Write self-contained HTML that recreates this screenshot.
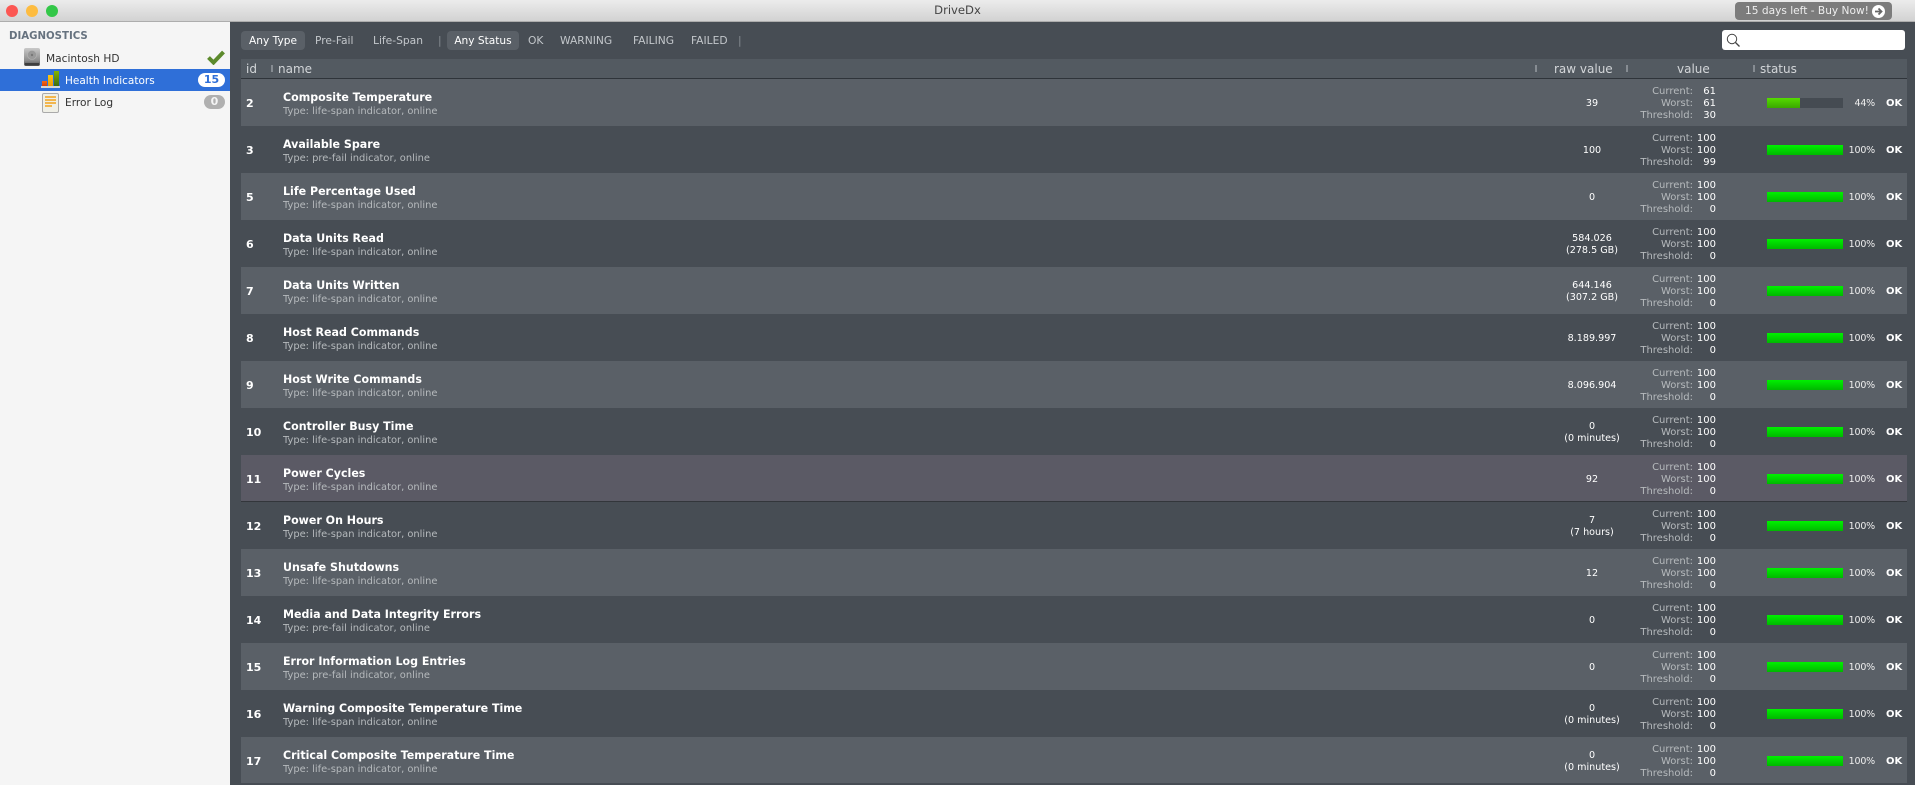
<!DOCTYPE html>
<html><head><meta charset="utf-8"><title>DriveDx</title>
<style>
html,body{margin:0;padding:0;width:1915px;height:785px;overflow:hidden;background:#474d54;font-family:"DejaVu Sans","Liberation Sans",sans-serif;font-size:10.5px;color:#fff}
div,span,b,svg{position:absolute;white-space:nowrap}
#title{left:0;top:0;width:1915px;height:21px;background:linear-gradient(#ececec,#d2d2d2);border-bottom:1px solid #adadad}
.lt{width:12px;height:12px;border-radius:50%;top:5px}
#tt{left:0;width:1915px;text-align:center;top:3px;font-size:11.6px;color:#444}
#buy{left:1735px;top:2px;width:157px;height:18px;background:#7c7c7c;border-radius:4px;color:#eee;font-size:10.6px;line-height:18px;text-indent:10px}
#side{left:0;top:22px;width:230px;height:763px;background:#f5f5f5;color:#333}
.st{font-size:10.6px}
#sel{left:0;top:47px;width:230px;height:22px;background:#2f6fd8}
.bd{border-radius:8px;height:14px;line-height:14px;text-align:center;font-weight:bold;font-size:11px}
.f{top:33px;font-size:10.7px;color:#c3c7cb;line-height:16px}
.fb{top:31px;height:19px;background:#5a6067;border-radius:4px;color:#fff;text-align:center;line-height:20px;font-size:10.6px}
.pipe{color:#868c92}
#search{left:1722px;top:30px;width:183px;height:20px;background:#fff;border-radius:3px}
#head{left:241px;top:59px;width:1666px;height:19px;background:#535a61;border-bottom:1px solid #2f343a}
.h{top:2px;font-size:12px;color:#d3d6d9;line-height:16px}
.sp{top:6px;width:2px;height:7px;background:#868c92}
.r{left:241px;width:1666px;height:47px;background:#474d54}
.a{background:#5a6067}
.i{left:5px;top:18px;font-size:11px;line-height:14px;font-weight:bold}
.n{left:42px;top:11px;font-size:11.05px;line-height:15px;font-weight:bold}
.t{left:42px;top:27px;font-size:9.9px;line-height:12px;color:#b6babd}
.v{left:1351px;width:200px;text-align:center;top:19px;font-size:9.6px;line-height:12px;margin-left:-100px}
.v2{top:13px}
.l{right:214px;top:7px;text-align:right;font-size:10px;line-height:12px;color:#b6babd}
.c{right:191px;top:7px;text-align:right;font-size:10px;line-height:12px}
.bar{left:1526px;top:19px;width:76px;height:10px;background:#454b52}
.bar i{display:block;height:10px;background:linear-gradient(#00f000,#00b800)}
.p{right:32px;top:19px;font-size:9.5px;letter-spacing:-.2px;line-height:12px;color:#eee}
.o{left:1645px;top:18px;font-size:10px;line-height:14px;font-weight:bold}
</style></head><body>
<div id="title">
<div class="lt" style="left:6px;background:#fc5753"></div>
<div class="lt" style="left:26px;background:#fdbc40"></div>
<div class="lt" style="left:46px;background:#33c748"></div>
<div id="tt">DriveDx</div>
<div id="buy">15 days left - Buy Now!<svg style="left:137px;top:3px" width="13" height="13" viewBox="0 0 13 13"><circle cx="6.5" cy="6.5" r="6.5" fill="#fff"/><path d="M3 6.5H9M6.5 3.5L9.5 6.5L6.5 9.5" stroke="#666" stroke-width="1.8" fill="none"/></svg></div>
</div>
<div id="side">
<div class="st" style="left:9px;top:9px;font-weight:bold;color:#66727f;font-size:10.2px">DIAGNOSTICS</div>
<svg style="left:23px;top:26px" width="18" height="18" viewBox="0 0 18 18"><defs><linearGradient id="hd" x1="0" y1="0" x2="0" y2="1"><stop offset="0" stop-color="#c9c9c9"/><stop offset=".7" stop-color="#8c8c8c"/><stop offset="1" stop-color="#4c4c4c"/></linearGradient><linearGradient id="gg" x1="0" y1="0" x2="0" y2="1"><stop offset="0" stop-color="#86b400"/><stop offset="1" stop-color="#3c6c10"/></linearGradient><linearGradient id="yy" x1="0" y1="0" x2="0" y2="1"><stop offset="0" stop-color="#fcc810"/><stop offset="1" stop-color="#ee9a0a"/></linearGradient><linearGradient id="oo" x1="0" y1="0" x2="0" y2="1"><stop offset="0" stop-color="#f56a18"/><stop offset="1" stop-color="#d84208"/></linearGradient></defs><rect x="1" y="0" width="16" height="18" rx="2" fill="url(#hd)"/><circle cx="9" cy="7" r="4.5" fill="#9a9a9a" stroke="#b4b4b4" stroke-width=".6"/><circle cx="9" cy="7" r="1.2" fill="#777"/><rect x="2" y="15" width="14" height="2" fill="#3e3e3e"/></svg>
<div class="st" style="left:46px;top:31px">Macintosh HD</div>
<svg style="left:207px;top:28px" width="18" height="15" viewBox="0 0 18 15"><path d="M1.5 7.5L6.5 12.5L16.5 2" stroke="#5c8a2c" stroke-width="4" fill="none"/></svg>
<div id="sel"></div>
<svg style="left:41px;top:48px" width="19" height="18" viewBox="0 0 19 18"><rect x="1" y="11" width="5" height="5" fill="url(#oo)"/><rect x="7" y="5" width="5" height="11" fill="url(#yy)"/><rect x="13" y="1" width="5" height="15" fill="url(#gg)"/><rect x="0" y="16" width="19" height="2" fill="#d7d7d7"/></svg>
<div class="st" style="left:65px;top:53px;color:#fff;font-size:10.5px">Health Indicators</div>
<div class="bd" style="left:198px;top:51px;width:27px;background:#fff;color:#2f6fd8">15</div>
<svg style="left:42px;top:71px" width="17" height="20" viewBox="0 0 17 20"><rect x=".5" y=".5" width="16" height="19" rx="1.5" fill="#efefe6" stroke="#aaa"/><path d="M3 4H14M3 7H14M3 10H14M3 13H10" stroke="#f4a41c" stroke-width="1.6"/></svg>
<div class="st" style="left:65px;top:75px">Error Log</div>
<div class="bd" style="left:204px;top:73px;width:21px;background:#b0b0b0;color:#f5f5f5">0</div>
</div>

<div class="fb" style="left:241px;width:64px">Any Type</div>
<div class="f" style="left:315px">Pre-Fail</div>
<div class="f" style="left:373px">Life-Span</div>
<div class="f pipe" style="left:438px">|</div>
<div class="fb" style="left:447px;width:72px">Any Status</div>
<div class="f" style="left:528px">OK</div>
<div class="f" style="left:560px">WARNING</div>
<div class="f" style="left:633px">FAILING</div>
<div class="f" style="left:691px">FAILED</div>
<div class="f pipe" style="left:738px">|</div>
<div id="search"><svg style="left:4px;top:3px" width="15" height="15" viewBox="0 0 15 15"><circle cx="6" cy="6" r="4.7" stroke="#444" fill="none"/><path d="M9.5 9.5L13.5 13.5" stroke="#444" stroke-width="1.3"/></svg></div>

<div id="head">
<div class="h" style="left:5px">id</div><div class="sp" style="left:30px"></div>
<div class="h" style="left:37px">name</div><div class="sp" style="left:1294px"></div>
<div class="h" style="left:1313px">raw value</div><div class="sp" style="left:1385px"></div>
<div class="h" style="left:1436px">value</div><div class="sp" style="left:1512px"></div>
<div class="h" style="left:1519px">status</div>
</div>

<div class="r a" style="top:79px"><b class="i">2</b><b class="n">Composite Temperature</b><span class="t">Type: life-span indicator, online</span><span class="v">39</span><span class="l">Current:<br>Worst:<br>Threshold:</span><span class="c">61<br>61<br>30</span><div class="bar"><i style="width:44%;background:linear-gradient(#55dc00,#3aa800)"></i></div><span class="p">44%</span><b class="o">OK</b></div>
<div class="r" style="top:126px"><b class="i">3</b><b class="n">Available Spare</b><span class="t">Type: pre-fail indicator, online</span><span class="v">100</span><span class="l">Current:<br>Worst:<br>Threshold:</span><span class="c">100<br>100<br>99</span><div class="bar"><i style="width:100%"></i></div><span class="p">100%</span><b class="o">OK</b></div>
<div class="r a" style="top:173px"><b class="i">5</b><b class="n">Life Percentage Used</b><span class="t">Type: life-span indicator, online</span><span class="v">0</span><span class="l">Current:<br>Worst:<br>Threshold:</span><span class="c">100<br>100<br>0</span><div class="bar"><i style="width:100%"></i></div><span class="p">100%</span><b class="o">OK</b></div>
<div class="r" style="top:220px"><b class="i">6</b><b class="n">Data Units Read</b><span class="t">Type: life-span indicator, online</span><span class="v v2">584.026<br>(278.5 GB)</span><span class="l">Current:<br>Worst:<br>Threshold:</span><span class="c">100<br>100<br>0</span><div class="bar"><i style="width:100%"></i></div><span class="p">100%</span><b class="o">OK</b></div>
<div class="r a" style="top:267px"><b class="i">7</b><b class="n">Data Units Written</b><span class="t">Type: life-span indicator, online</span><span class="v v2">644.146<br>(307.2 GB)</span><span class="l">Current:<br>Worst:<br>Threshold:</span><span class="c">100<br>100<br>0</span><div class="bar"><i style="width:100%"></i></div><span class="p">100%</span><b class="o">OK</b></div>
<div class="r" style="top:314px"><b class="i">8</b><b class="n">Host Read Commands</b><span class="t">Type: life-span indicator, online</span><span class="v">8.189.997</span><span class="l">Current:<br>Worst:<br>Threshold:</span><span class="c">100<br>100<br>0</span><div class="bar"><i style="width:100%"></i></div><span class="p">100%</span><b class="o">OK</b></div>
<div class="r a" style="top:361px"><b class="i">9</b><b class="n">Host Write Commands</b><span class="t">Type: life-span indicator, online</span><span class="v">8.096.904</span><span class="l">Current:<br>Worst:<br>Threshold:</span><span class="c">100<br>100<br>0</span><div class="bar"><i style="width:100%"></i></div><span class="p">100%</span><b class="o">OK</b></div>
<div class="r" style="top:408px"><b class="i">10</b><b class="n">Controller Busy Time</b><span class="t">Type: life-span indicator, online</span><span class="v v2">0<br>(0 minutes)</span><span class="l">Current:<br>Worst:<br>Threshold:</span><span class="c">100<br>100<br>0</span><div class="bar"><i style="width:100%"></i></div><span class="p">100%</span><b class="o">OK</b></div>
<div class="r" style="top:455px;background:#5b5a65;box-shadow:inset 0 -1px #33363b"><b class="i">11</b><b class="n">Power Cycles</b><span class="t">Type: life-span indicator, online</span><span class="v">92</span><span class="l">Current:<br>Worst:<br>Threshold:</span><span class="c">100<br>100<br>0</span><div class="bar"><i style="width:100%"></i></div><span class="p">100%</span><b class="o">OK</b></div>
<div class="r" style="top:502px"><b class="i">12</b><b class="n">Power On Hours</b><span class="t">Type: life-span indicator, online</span><span class="v v2">7<br>(7 hours)</span><span class="l">Current:<br>Worst:<br>Threshold:</span><span class="c">100<br>100<br>0</span><div class="bar"><i style="width:100%"></i></div><span class="p">100%</span><b class="o">OK</b></div>
<div class="r a" style="top:549px"><b class="i">13</b><b class="n">Unsafe Shutdowns</b><span class="t">Type: life-span indicator, online</span><span class="v">12</span><span class="l">Current:<br>Worst:<br>Threshold:</span><span class="c">100<br>100<br>0</span><div class="bar"><i style="width:100%"></i></div><span class="p">100%</span><b class="o">OK</b></div>
<div class="r" style="top:596px"><b class="i">14</b><b class="n">Media and Data Integrity Errors</b><span class="t">Type: pre-fail indicator, online</span><span class="v">0</span><span class="l">Current:<br>Worst:<br>Threshold:</span><span class="c">100<br>100<br>0</span><div class="bar"><i style="width:100%"></i></div><span class="p">100%</span><b class="o">OK</b></div>
<div class="r a" style="top:643px"><b class="i">15</b><b class="n">Error Information Log Entries</b><span class="t">Type: pre-fail indicator, online</span><span class="v">0</span><span class="l">Current:<br>Worst:<br>Threshold:</span><span class="c">100<br>100<br>0</span><div class="bar"><i style="width:100%"></i></div><span class="p">100%</span><b class="o">OK</b></div>
<div class="r" style="top:690px"><b class="i">16</b><b class="n">Warning Composite Temperature Time</b><span class="t">Type: life-span indicator, online</span><span class="v v2">0<br>(0 minutes)</span><span class="l">Current:<br>Worst:<br>Threshold:</span><span class="c">100<br>100<br>0</span><div class="bar"><i style="width:100%"></i></div><span class="p">100%</span><b class="o">OK</b></div>
<div class="r a" style="top:737px;height:46px"><b class="i">17</b><b class="n">Critical Composite Temperature Time</b><span class="t">Type: life-span indicator, online</span><span class="v v2">0<br>(0 minutes)</span><span class="l">Current:<br>Worst:<br>Threshold:</span><span class="c">100<br>100<br>0</span><div class="bar"><i style="width:100%"></i></div><span class="p">100%</span><b class="o">OK</b></div>
</body></html>
